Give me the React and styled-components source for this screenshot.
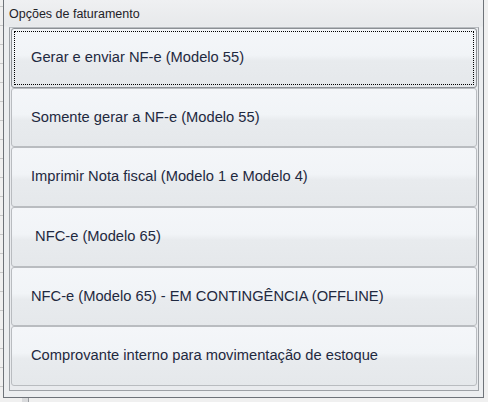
import React from 'react';
import styled, { createGlobalStyle } from 'styled-components';

const GlobalStyle = createGlobalStyle`
  html, body {
    margin: 0;
    padding: 0;
    background: #f0f0f0;
  }
`;

const options = [
  'Gerar e enviar NF-e (Modelo 55)',
  'Somente gerar a NF-e (Modelo 55)',
  'Imprimir Nota fiscal (Modelo 1 e Modelo 4)',
  '\u00a0NFC-e (Modelo 65)',
  'NFC-e (Modelo 65) - EM CONTINGÊNCIA (OFFLINE)',
  'Comprovante interno para movimentação de estoque',
];

// the app behind the dialog only peeks out along the edges
const Page = styled.div`
  width: 488px;
  height: 402px;
  box-sizing: border-box;
  padding: 0 4px 0 3px;
  overflow: hidden;
  background:
    linear-gradient(to right, transparent 22px, #d9dadc 22px, #d9dadc 28px, #9a9da1 28px, #9a9da1 29px, transparent 29px)
      left bottom / 100% 4px no-repeat,
    repeating-linear-gradient(transparent 0px, transparent 6px, #c8c8c8 6px, #c8c8c8 7px, transparent 7px, transparent 19px)
      left top / 3px 100% no-repeat,
    #f0f0f0;
`;

const Window = styled.div`
  height: 398px;
  box-sizing: border-box;
  border: 1px solid #6e7379;
  border-top: none;
  background: linear-gradient(#eff0f2 0px, #e7e9eb 26px, #eceef0 27px, #eceef0 100%);
  display: flex;
  flex-direction: column;
`;

const Legend = styled.div`
  height: 27px;
  box-sizing: border-box;
  padding: 7px 0 0 5px;
  font-family: 'Liberation Sans', Arial, sans-serif;
  font-size: 12.5px;
  color: #1f2228;
`;

const Group = styled.div`
  margin: 0 4px 5px 5px;
  border: 1px solid #9da1a6;
  border-top-color: #b8bcc0;
  padding: 0 1px 4px 1px;
  display: flex;
  flex-direction: column;
  background: #e9ebee;
`;

const OptionButton = styled.button`
  height: 59.7px;
  box-sizing: border-box;
  display: flex;
  align-items: center;
  padding: 0 0 2px 19px;
  margin: 0;
  border: 1px solid ${(p) => (p.$focused ? '#8b8f94' : '#b9bcc0')};
  border-radius: 3px;
  background: linear-gradient(#f4f6f9 0%, #f1f4f7 45%, #e8ebee 55%, #e5e8eb 100%);
  font-family: 'Liberation Sans', Arial, sans-serif;
  font-size: 14.7px;
  color: #1f2940;
  text-align: left;
  cursor: default;
  outline: ${(p) => (p.$focused ? '1px dotted #000' : 'none')};
  outline-offset: -4px;
`;

export default function App() {
  return (
    <>
      <GlobalStyle />
      <Page>
        <Window>
          <Legend>Opções de faturamento</Legend>
          <Group>
            {options.map((label, i) => (
              <OptionButton key={i} $focused={i === 0}>
                {label}
              </OptionButton>
            ))}
          </Group>
        </Window>
      </Page>
    </>
  );
}
